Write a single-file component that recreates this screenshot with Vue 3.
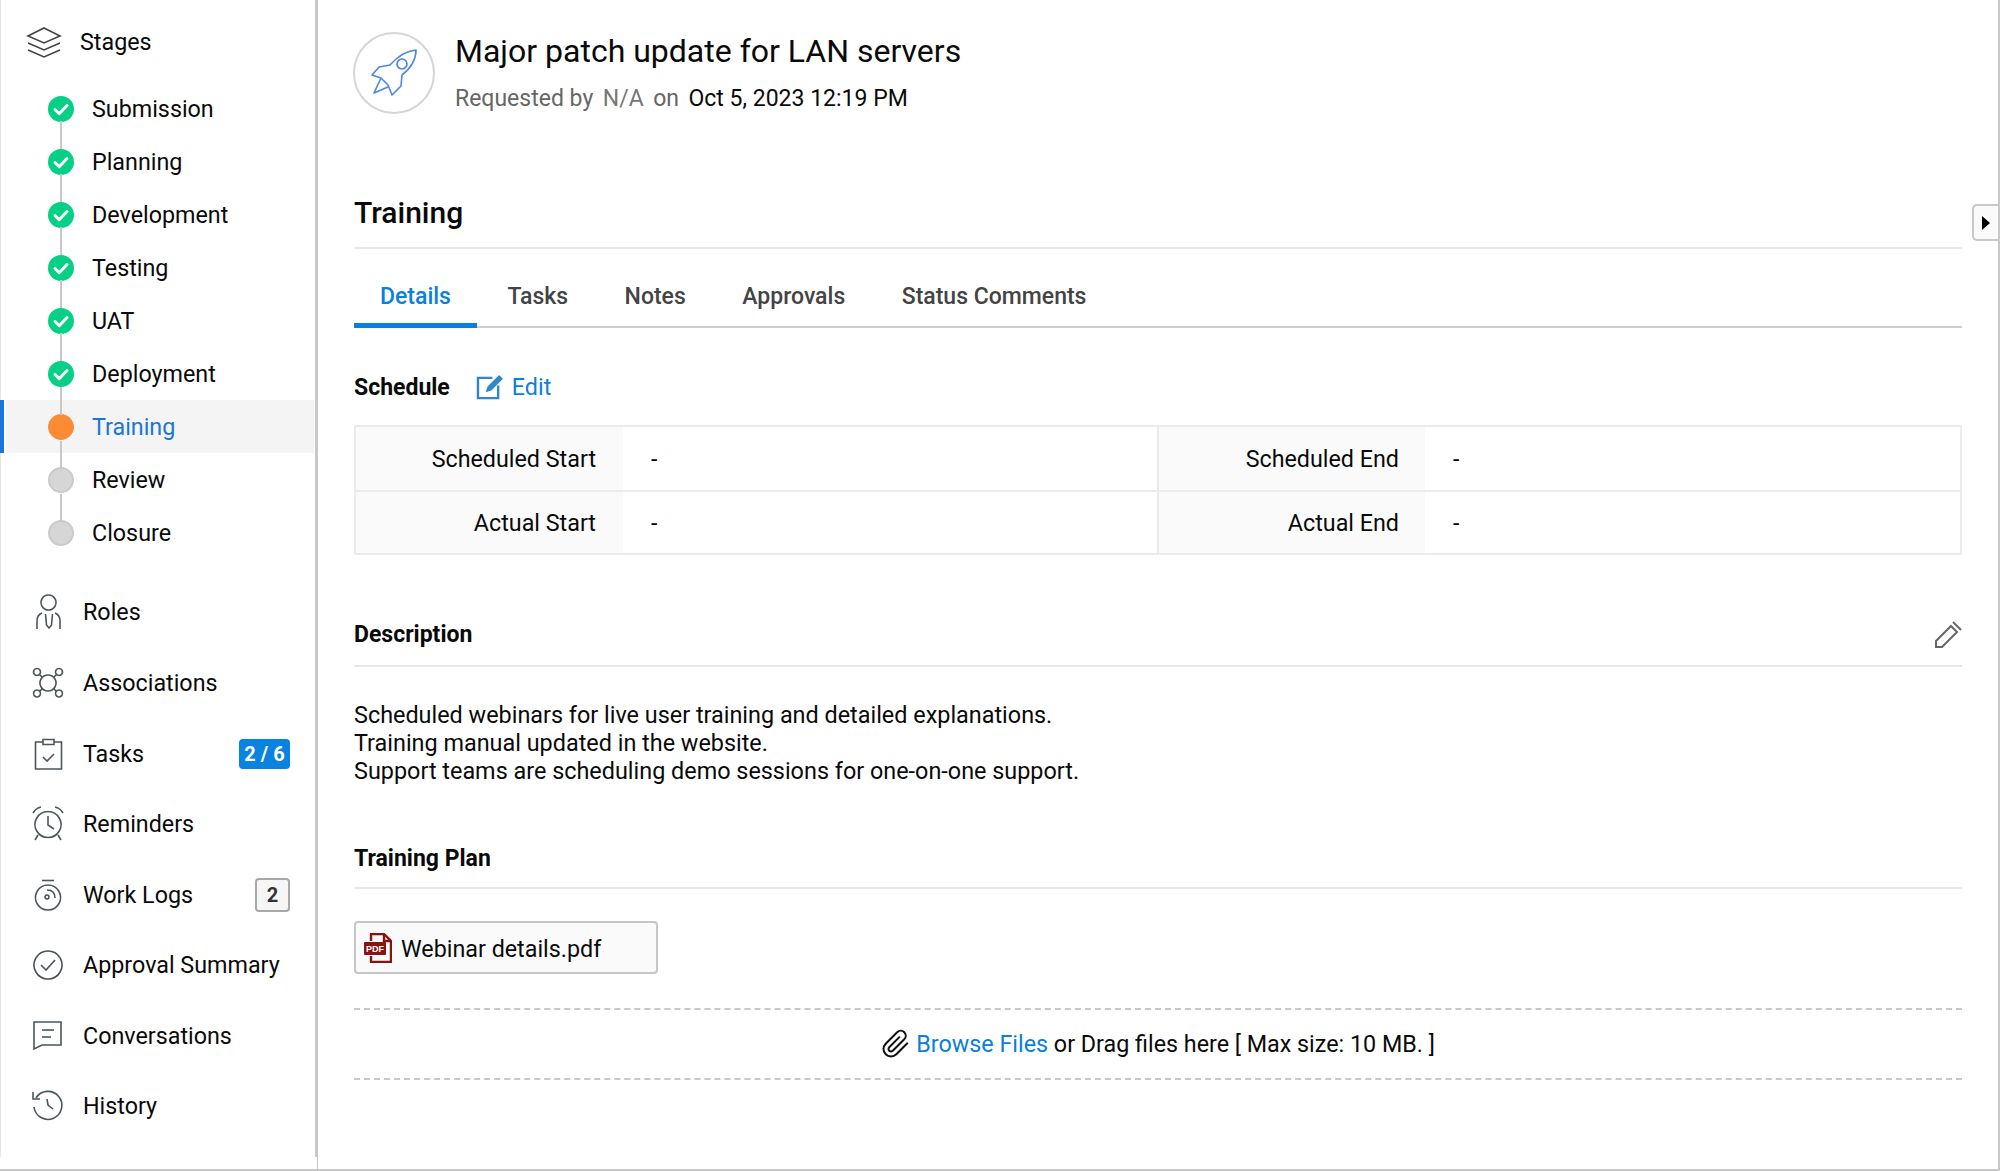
<script setup>
const stages = [
  { name: 'Submission', state: 'done' },
  { name: 'Planning', state: 'done' },
  { name: 'Development', state: 'done' },
  { name: 'Testing', state: 'done' },
  { name: 'UAT', state: 'done' },
  { name: 'Deployment', state: 'done' },
  { name: 'Training', state: 'active' },
  { name: 'Review', state: 'todo' },
  { name: 'Closure', state: 'todo' }
]
const nav = [
  { name: 'Roles', paths: ['M18.5 1a7.5 7.5 0 1 0 .01 0', 'M7 35V27q0-6 5-8', 'M30 35V27q0-6-5-8', 'M15.5 20l1 11 2.5 3 2.5-3 1-11'] },
  { name: 'Associations', paths: ['M7 3.5a3.5 3.5 0 1 0 .01 0', 'M29 3.5a3.5 3.5 0 1 0 .01 0', 'M7 25a3.5 3.5 0 1 0 .01 0', 'M29 25a3.5 3.5 0 1 0 .01 0', 'M18 10a8 8 0 1 0 .01 0', 'M9.5 9.5l3 3', 'M26.5 9.5l-3 3', 'M9.5 26.5l3-3', 'M26.5 26.5l-3-3'] },
  { name: 'Tasks', paths: ['M13 6H5.5v27h26V6H24', 'M13 3.5h11v5H13z', 'M13 21l4 4 7-7'], badge: '2 / 6', badgeType: 'blue' },
  { name: 'Reminders', paths: ['M18 5.5a13 13 0 1 0 .01 0', 'M18 10v9l6 4', 'M3 7q3-5 8-6', 'M33 7q-3-5-8-6', 'M8 29l-3 5', 'M28 29l3 5'] },
  { name: 'Work Logs', paths: ['M18 8a12.5 12.5 0 1 0 .01 0', 'M12 3.5h12', 'M17 13q8 0 8 8', 'M17 18a2 2 0 1 0 .01 0'], badge: '2', badgeType: 'grey' },
  { name: 'Approval Summary', paths: ['M18 4a14 14 0 1 0 .01 0', 'M11 18l5 5 9-10'] },
  { name: 'Conversations', paths: ['M4 4h27v23H12l-8 4z', 'M12 12h12', 'M12 19h9'] },
  { name: 'History', paths: ['M6 10a14 14 0 1 1-2 9', 'M3 4v7h7', 'M17 11l1 6 5 4'] }
]
const tabs = ['Details', 'Tasks', 'Notes', 'Approvals', 'Status Comments']
</script>

<template>
  <div class="page">
    <aside class="sidebar">
      <div class="stages-head">
        <svg class="layers" viewBox="0 0 36 32"><path d="M18 2l16 8-16 7-16-7z" /><path d="M2 17l16 7 16-7" /><path d="M2 24l16 7 16-7" /></svg>
        <span>Stages</span>
      </div>
      <ul class="stage-list">
        <li v-for="(s, i) in stages" :key="s.name" class="stage" :class="s.state">
          <span class="node" :class="{ first: i === 0, last: i === stages.length - 1 }">
            <svg v-if="s.state === 'done'" viewBox="0 0 26 26"><path d="M7 13.5l4.2 4.2L19 9.5" /></svg>
          </span>
          <span>{{ s.name }}</span>
        </li>
      </ul>
      <ul class="nav-list">
        <li v-for="n in nav" :key="n.name" class="nav-item">
          <svg class="nav-icon" viewBox="0 0 36 36"><path v-for="d in n.paths" :key="d" :d="d" /></svg>
          <span class="nav-name">{{ n.name }}</span>
          <span v-if="n.badge" class="badge" :class="n.badgeType">{{ n.badge }}</span>
        </li>
      </ul>
    </aside>

    <main class="main">
      <header class="head">
        <div class="avatar">
          <svg viewBox="0 0 48 48"><path d="M46 2C36 3 27 9 20 17L9 19 2 27l9 3 7 7 4 10 9-9 1-11C41 20 46 12 46 2z" /><path d="M32 11a5 5 0 1 0 .01 0" /><path d="M11 30L4 45l14-6" /></svg>
        </div>
        <div>
          <h1>Major patch update for LAN servers</h1>
          <p class="meta"><span class="muted">Requested by</span><span class="muted na">N/A</span><span class="muted">on</span><span>Oct 5, 2023 12:19 PM</span></p>
        </div>
      </header>

      <h2>Training</h2>

      <nav class="tabs">
        <a v-for="(t, i) in tabs" :key="t" class="tab" :class="{ on: i === 0 }">{{ t }}</a>
      </nav>

      <div class="sched-head">
        <strong>Schedule</strong>
        <a class="edit">
          <svg viewBox="0 0 28 26"><path d="M17 3H2v21h21V11" /><path class="fill" d="M24 0l4 4-12 12-6 2 2-6z" /></svg>
          Edit
        </a>
      </div>

      <div class="table">
        <div class="lbl">Scheduled Start</div><div class="val">-</div>
        <div class="lbl mid">Scheduled End</div><div class="val">-</div>
        <div class="lbl low">Actual Start</div><div class="val low">-</div>
        <div class="lbl mid low">Actual End</div><div class="val low">-</div>
      </div>

      <div class="section desc-head">
        <strong>Description</strong>
        <svg class="pen" viewBox="0 0 28 28"><path d="M2 26v-6L17 5l6 6L8 26z" /><path d="M19 1l8 8" /></svg>
      </div>
      <p class="desc">Scheduled webinars for live user training and detailed explanations.<br />Training manual updated in the website.<br />Support teams are scheduling demo sessions for one-on-one support.</p>

      <div class="section plan-head"><strong>Training Plan</strong></div>

      <div class="file">
        <svg viewBox="0 0 28 30"><path class="doc" d="M7 8V1h13l7 7v21H7v-6" /><path class="doc" d="M20 1v7h7" /><rect class="band" x="0" y="9" width="22" height="13" rx="1" /><text x="11" y="19" text-anchor="middle">PDF</text></svg>
        <span class="file-name">Webinar details.pdf</span>
      </div>

      <div class="drop">
        <svg viewBox="0 0 24 24"><path d="M21.44 11.05l-9.19 9.19a6 6 0 0 1-8.49-8.49l9.19-9.19a4 4 0 0 1 5.66 5.66l-9.2 9.19a2 2 0 0 1-2.83-2.83l8.49-8.48" /></svg>
        <a>Browse Files</a>&nbsp;or Drag files here [ Max size: 10 MB. ]
      </div>
    </main>

    <button class="toggle" type="button" aria-label="Expand"><span></span></button>
  </div>
</template>

<style scoped>
.page {
  position: relative;
  display: flex;
  box-sizing: border-box;
  width: 2000px;
  height: 1171px;
  overflow: hidden;
  background: #fff;
  border-right: 2px solid #c8c8c8;
  border-bottom: 2px solid #c8c8c8;
  font-family: Roboto, "Liberation Sans", sans-serif;
  font-size: 23.3px;
  color: #0a0a0a;
}
ul { list-style: none; margin: 0; padding: 0; }
svg { display: block; flex: none; }

.sidebar {
  box-sizing: border-box;
  flex: none;
  width: 318px;
  padding-left: 1px;
  border-right: 1px solid #c8c8c8;
  background:
    linear-gradient(#c8c8c8, #c8c8c8) no-repeat right top / 2px 1157px,
    linear-gradient(#e6e6e6, #e6e6e6) no-repeat left top / 1px 1157px;
}
.stages-head {
  display: flex;
  align-items: center;
  gap: 18px;
  height: 83px;
  padding-left: 25px;
  box-sizing: border-box;
}
.layers {
  width: 36px;
  height: 32px;
  fill: none;
  stroke: #444;
  stroke-width: 1.6;
}
.stage {
  display: flex;
  align-items: center;
  height: 52.9px;
  padding-left: 47px;
  gap: 18px;
  position: relative;
}
.stage.active {
  color: #1a76d8;
  background: linear-gradient(#f4f4f4, #f4f4f4) no-repeat 5px 0 / 308px 100%;
}
.stage.active::before {
  content: "";
  position: absolute;
  left: -1px;
  top: 0;
  bottom: 0;
  width: 4px;
  background: #1a76d8;
}
.node {
  position: relative;
  box-sizing: border-box;
  width: 26px;
  height: 26px;
  border-radius: 50%;
  background: #05d086;
  z-index: 1;
  flex: none;
}
.node::before {
  content: "";
  position: absolute;
  left: 12px;
  top: -28px;
  width: 2px;
  height: 28px;
  background: #c8c8c8;
}
.node.first::before { display: none; }
.node svg {
  width: 26px;
  height: 26px;
  fill: none;
  stroke: #fff;
  stroke-width: 3;
  stroke-linecap: round;
  stroke-linejoin: round;
}
.active .node { background: #fd8b33; border: 1px solid #f58a3c; }
.active .node::before { left: 11px; top: -28px; }
.todo .node { background: #d6d6d6; border: 2px solid #cbcbcb; }
.todo .node::before { left: 10px; top: -28px; }

.nav-list { margin-top: 18px; }
.nav-item {
  display: flex;
  align-items: center;
  height: 70.6px;
  padding-left: 29px;
  padding-right: 27px;
}
.nav-icon {
  width: 36px;
  height: 36px;
  fill: none;
  stroke: #4c565b;
  stroke-width: 1.6;
  margin-right: 17px;
}
.nav-name { flex: 1; white-space: nowrap; }
.badge {
  box-sizing: border-box;
  border-radius: 4px;
  font-size: 20px;
  font-weight: 700;
  display: flex;
  align-items: center;
  justify-content: center;
}
.badge.blue {
  width: 51px;
  height: 30px;
  background: #0a82e0;
  color: #fff;
}
.badge.grey {
  width: 35px;
  height: 34px;
  border: 2px solid #a8a8a8;
  background: #f6f6f6;
  color: #333;
}

.main {
  box-sizing: border-box;
  flex: 1;
  padding: 32px 36px 0 36px;
  min-width: 0;
}
.head { display: flex; gap: 20px; height: 82px; }
.avatar {
  box-sizing: border-box;
  width: 82px;
  height: 82px;
  margin-left: -1px;
  border: 2px solid #d6d6d6;
  border-radius: 50%;
  display: flex;
  align-items: center;
  justify-content: center;
}
.avatar svg {
  width: 48px;
  height: 48px;
  fill: none;
  stroke: #4b86e8;
  stroke-width: 1.6;
  stroke-linejoin: round;
  margin-top: -2px;
}
h1 {
  margin: 0;
  font-size: 32px;
  font-weight: 400;
  line-height: 38px;
}
.meta {
  display: flex;
  gap: 9.5px;
  margin: 10px 0 0;
  line-height: 38px;
  font-size: 23px;
}
.muted { color: #666; }
.na { color: #777; }
h2 {
  margin: 79px 0 0;
  padding-bottom: 14px;
  font-size: 30px;
  font-weight: 500;
  line-height: 40px;
  border-bottom: 2px solid #e8e8e8;
}
.tabs {
  display: flex;
  gap: 4.5px;
  height: 79px;
  box-sizing: border-box;
  border-bottom: 2px solid #cfcfcf;
}
.tab {
  display: flex;
  align-items: center;
  padding: 21px 26px 0;
  margin-bottom: -2px;
  font-size: 23px;
  font-weight: 500;
  color: #444;
  white-space: nowrap;
  border-bottom: 5px solid transparent;
}
.tab.on {
  color: #0a7fdc;
  border-bottom-color: #0a7fdc;
}
strong { font-weight: 700; font-size: 23px; }
.sched-head {
  display: flex;
  align-items: center;
  height: 40px;
  margin-top: 39px;
}
.edit {
  display: flex;
  align-items: center;
  gap: 9px;
  margin-left: 26px;
  color: #0a7fdc;
}
.edit svg {
  width: 27px;
  height: 25px;
  fill: none;
  stroke: #2f86d0;
  stroke-width: 2.5;
}
.edit svg .fill { fill: #2f86d0; stroke: none; }
.table {
  display: grid;
  grid-template-columns: 267px 534px 268px 1fr;
  grid-template-rows: 63px 63px;
  margin-top: 18px;
  border: 2px solid #ebebeb;
  border-radius: 1px;
  box-sizing: border-box;
  height: 130px;
}
.lbl, .val { display: flex; align-items: center; }
.lbl {
  justify-content: flex-end;
  padding-right: 27px;
  background: #fafafa;
}
.lbl.mid { padding-right: 26px; }
.val { padding-left: 28px; }
.mid { border-left: 2px solid #ebebeb; }
.low { border-top: 2px solid #ebebeb; }
.section {
  display: flex;
  align-items: center;
  justify-content: space-between;
  line-height: 40px;
  border-bottom: 2px solid #e8e8e8;
}
.desc-head { margin-top: 60px; padding-bottom: 10px; }
.pen {
  width: 28px;
  height: 28px;
  fill: none;
  stroke: #666;
  stroke-width: 2;
}
.desc {
  margin: 34px 0 0;
  line-height: 28px;
  font-size: 23.4px;
}
.plan-head { margin-top: 54px; padding-bottom: 8px; }
.file {
  box-sizing: border-box;
  display: flex;
  align-items: center;
  gap: 9px;
  width: 304px;
  height: 53px;
  margin-top: 32px;
  padding-left: 8px;
  background: #fafafa;
  border: 2px solid #c6c6c6;
  border-radius: 4px;
}
.file svg { width: 28px; height: 30px; }
.file-name { padding-top: 3px; }
.doc { fill: none; stroke: #8a1212; stroke-width: 2.4; }
.band { fill: #8a1212; }
.file text {
  fill: #fff;
  font-size: 9px;
  font-weight: 700;
  font-family: "Liberation Sans", sans-serif;
}
.drop {
  box-sizing: border-box;
  display: flex;
  align-items: center;
  justify-content: center;
  height: 72px;
  margin-top: 34px;
  padding-left: 6px;
  border-top: 2px dashed #c8c8c8;
  border-bottom: 2px dashed #c8c8c8;
  white-space: pre;
}
.drop svg {
  width: 30px;
  height: 30px;
  margin-right: 5px;
  fill: none;
  stroke: #111;
  stroke-width: 1.6;
}
.drop a { color: #0a7fdc; }
.toggle {
  position: absolute;
  top: 204px;
  right: 0;
  box-sizing: border-box;
  width: 26px;
  height: 37px;
  padding: 0;
  background: #fafafa;
  border: 2px solid #c8c8c8;
  border-right: 0;
  border-radius: 5px 0 0 5px;
  display: flex;
  align-items: center;
  justify-content: center;
}
.toggle span {
  width: 0;
  height: 0;
  border-left: 8px solid #000;
  border-top: 7px solid transparent;
  border-bottom: 7px solid transparent;
}
</style>
